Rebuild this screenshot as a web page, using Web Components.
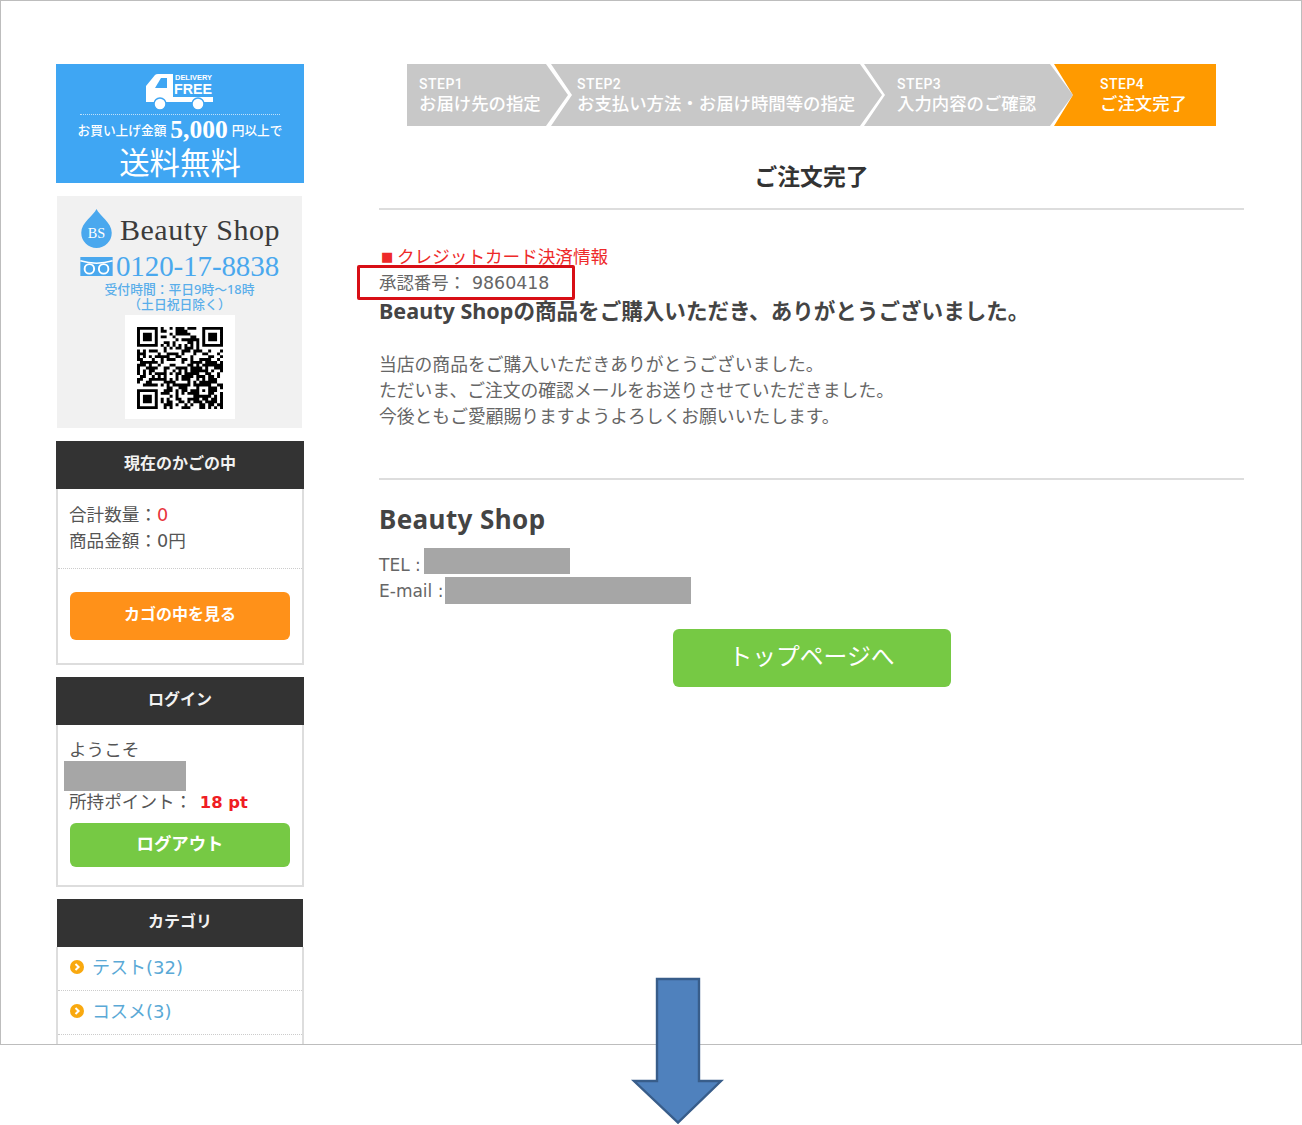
<!DOCTYPE html>
<html lang="ja"><head><meta charset="utf-8"><title>ご注文完了</title>
<style>
html,body{margin:0;padding:0;background:#fff}
body{position:relative;width:1302px;height:1125px;overflow:hidden;font-family:"DejaVu Sans","Noto Sans CJK JP",sans-serif;color:#555}
</style></head><body>
<app-frame>
  <side-bar slot="side">
    <free-banner></free-banner>
    <contact-card></contact-card>
    <side-panel heading="現在のかごの中">
      <cart-summary></cart-summary>
    </side-panel>
    <side-panel heading="ログイン">
      <login-box></login-box>
    </side-panel>
    <side-panel heading="カテゴリ" flush>
      <category-item>テスト(32)</category-item>
      <category-item>コスメ(3)</category-item>
      <category-item></category-item>
    </side-panel>
  </side-bar>
  <order-main slot="main"></order-main>
</app-frame>
<down-arrow></down-arrow>
<script>
const FN='"Noto Sans","Noto Sans CJK JP",sans-serif';
const FF='"DejaVu Sans","Noto Sans CJK JP",sans-serif';
function def(name,html,init){
  customElements.define(name,class extends HTMLElement{
    connectedCallback(){
      if(this.shadowRoot)return;
      const r=this.attachShadow({mode:'open'});
      r.innerHTML=typeof html==='function'?html(this):html;
      if(init)init(r,this);
    }
  });
}
def('app-frame',`<style>
:host{display:grid;box-sizing:border-box;width:1302px;height:1045px;border:1px solid #bdbdbd;overflow:hidden;padding:63px 57px 0 55px;grid-template-columns:248px 865px;column-gap:75px;align-items:start}
</style><slot name="side"></slot><slot name="main"></slot>`);
def('side-bar',`<style>:host{display:flex;flex-direction:column;align-items:stretch}</style><slot></slot>`);
def('free-banner',`<style>
:host{display:block;height:119px;background:#3fa6f3;color:#fff;text-align:center;overflow:hidden}
svg{display:block;margin:9px auto 0}
.dots{margin:3px 24px 0;border-top:1px dotted #bfe0fa}
.price{display:flex;justify-content:center;align-items:center;height:30px;margin-top:0;font:500 12.7px/30px ${FN};white-space:nowrap}
.price b{font:700 25.5px/30px "Liberation Serif",serif;margin:0 4px}
.free{font:400 30.4px/36px ${FN}}
</style>
<svg width="68" height="38" viewBox="0 0 68 38"><path fill="#fff" d="M0 13 L9 2 Q10 1 12 1 H27 V24 H67 V29 H0 Z"/><path fill="#3fa6f3" d="M9 15 L15 5 H21 V15 Z"/><circle cx="14" cy="31" r="6" fill="#fff" stroke="#3fa6f3" stroke-width="1.5"/><circle cx="52" cy="31" r="6" fill="#fff" stroke="#3fa6f3" stroke-width="1.5"/><text x="29" y="7" font-family="Liberation Sans" font-weight="700" font-size="7" fill="#fff" textLength="37" lengthAdjust="spacingAndGlyphs">DELIVERY</text><text x="28" y="21" font-family="Liberation Sans" font-weight="700" font-size="15" fill="#fff" textLength="38" lengthAdjust="spacingAndGlyphs">FREE</text></svg>
<div class="dots"></div>
<div class="price"><span>お買い上げ金額</span><b>5,000</b><span>円以上で</span></div>
<div class="free">送料無料</div>`);
def('contact-card',`<style>
:host{display:block;margin:13px 2px 13px 1px;height:232px;background:#f1f1f1;text-align:center;overflow:hidden}
.logo{display:flex;align-items:center;justify-content:center;gap:7px;height:46px;margin-top:9px}
.logo svg{margin-left:1px}
.logo span{font:400 30px/40px "Liberation Serif",serif;color:#3b3b3b;letter-spacing:.55px;margin-top:3px}
.tel{display:flex;align-items:center;justify-content:center;gap:3px;height:33px;margin-top:-1px;color:#4aa8ee;font:400 29px/33px "Liberation Serif",serif;letter-spacing:-.1px}
.hours{font:500 12.8px/15px ${FN};color:#5aaeea;margin-top:-1px}
qr-code{margin:3px auto 0}
</style>
<div class="logo"><svg width="33" height="40" viewBox="0 0 34 42"><path fill="#4aa8ee" d="M17 1 C20 8 33 15 33 26 A16 16 0 0 1 1 26 C1 15 14 8 17 1Z"/><text x="17" y="32" text-anchor="middle" font-family="Liberation Serif" font-size="15" fill="#fff">BS</text></svg><span>Beauty Shop</span></div>
<div class="tel"><svg width="33" height="19" viewBox="0 0 34 20"><rect width="34" height="20" fill="#4aa8ee"/><path d="M0 4 Q17 9 34 4" fill="none" stroke="#fff" stroke-width="1.6"/><circle cx="9.5" cy="12.5" r="5" fill="none" stroke="#fff" stroke-width="2"/><circle cx="24.5" cy="12.5" r="5" fill="none" stroke="#fff" stroke-width="2"/></svg><span>0120-17-8838</span></div>
<div class="hours">受付時間：平日9時～18時<br>（土日祝日除く）</div>
<qr-code></qr-code>`);
def('qr-code',`<style>:host{display:block;box-sizing:border-box;width:110px;height:104px;background:#fff;padding:12px 12px 0}svg{display:block}</style><svg width="86" height="82" viewBox="0 0 29 29" preserveAspectRatio="none"><path id="p" fill="#000"/></svg>`,(r)=>{
  const n=29;let s=20240611,d='';
  const rnd=()=>{s=(s*1664525+1013904223)>>>0;return s/4294967296};
  const inF=(x,y,a,b)=>x>=a&&x<a+8&&y>=b&&y<b+8;
  const finder=(a,b)=>`M${a} ${b}h7v7h-7zM${a+1} ${b+1}v5h5v-5zM${a+2} ${b+2}h3v3h-3z`;
  for(let y=0;y<n;y++)for(let x=0;x<n;x++){
    if(inF(x,y,0,0)||inF(x,y,21,0)||inF(x,y,0,21))continue;
    if(x>=20&&x<25&&y>=20&&y<25)continue;
    let on=rnd()<.54;
    if(y===6)on=x%2===0; if(x===6)on=y%2===0;
    if(on)d+=`M${x} ${y}h1v1h-1z`;
  }
  d+=finder(0,0)+finder(22,0)+finder(0,22)+'M20 20h5v5h-5zM21 21v3h3v-3zM22 22h1v1h-1z';
  const p=r.getElementById('p');p.setAttribute('d',d);p.setAttribute('fill-rule','evenodd');
});
def('side-panel',h=>`<style>
:host{display:block;margin-bottom:12px}
h3{margin:0;height:48px;background:#333;color:#f2f2f2;font:700 16px/44px ${FN};text-align:center}
:host([flush]) h3{margin:0 1px}
.b{border:2px solid #ddd;border-top:0}
</style><h3>${h.getAttribute('heading')}</h3><div class="b"><slot></slot></div>`);
def('action-button',`<style>
:host{display:block;color:#fff;text-align:center;border-radius:6px;font:700 16px/45px ${FN};background:var(--bg,#ff9119);height:var(--h,48px);line-height:calc(var(--h,48px) - 3px)}
</style><slot></slot>`);
def('cart-summary',`<style>
:host{display:block;font:400 17.6px/26px ${FF};color:#555}
.s{padding:13px 11px 14px;border-bottom:1px dotted #ccc}
.r{color:#e8343c}
action-button{margin:23px 12px 23px}
</style><div class="s">合計数量：<span class="r">0</span><br>商品金額：0円</div><action-button>カゴの中を見る</action-button>`);
def('login-box',`<style>
:host{display:block;font:400 17.6px/26px ${FF};color:#555;padding:12px 12px 18px 11px}
.red{color:#ef1d24;font-weight:700;font-size:16.4px;margin-left:2px}
gray-block{margin-left:-5px;width:122px;height:30px;margin-top:-2px}
.pt{line-height:22px;white-space:nowrap}
action-button{margin:9px 0 0 1px;--bg:#76c944;--h:44px;font-size:17.4px}
</style><div>ようこそ</div><gray-block></gray-block><div class="pt">所持ポイント： <span class="red">18 pt</span></div><action-button>ログアウト</action-button>`);
def('gray-block',`<style>:host{display:block;background:#a6a6a6}</style>`);
def('category-item',`<style>
:host{display:flex;align-items:center;box-sizing:content-box;height:41px;padding:0 0 2px 12px;border-bottom:1px dotted #ccc;gap:8px;color:#5aa9d6;font:400 18px/41px ${FF}}
svg{flex:none;position:relative;top:-1px}
</style><svg width="14" height="14" viewBox="0 0 14 14"><circle cx="7" cy="7" r="7" fill="#f9a90f"/><path d="M5.5 4 L8.6 7 L5.5 10" fill="none" stroke="#fff" stroke-width="2"/></svg><slot></slot>`);
def('step-bar',`<style>:host{display:flex;margin-left:28px;height:62px}</style><slot></slot>`);
def('step-item',h=>`<style>
:host{display:block;box-sizing:border-box;height:62px;background:var(--c,#c8c8c8);color:#fff;white-space:nowrap;flex:none}
.a{font:500 14px/18px Roboto,sans-serif;letter-spacing:.5px;padding-top:11px}
.b{font:500 17.4px/21px ${FN}}
</style><div class="a">${h.getAttribute('label')}</div><div class="b"><slot></slot></div>`);
def('order-main',`<style>
:host{display:block;color:#666}
step-item{margin-left:-18px}
.s1{margin-left:0;width:161px;padding-left:12px;clip-path:polygon(0 0,139px 0,100% 50%,139px 100%,0 100%)}
.s2{margin-left:-17px;width:331px;padding-left:26px;clip-path:polygon(0 0,309px 0,100% 50%,309px 100%,0 100%,21px 50%)}
.s3{width:209px;padding-left:33px;clip-path:polygon(0 0,186px 0,100% 50%,186px 100%,0 100%,21px 50%)}
.s4{margin-left:-19px;width:162px;padding-left:46px;--c:#ff9a00;clip-path:polygon(0 0,100% 0,100% 100%,0 100%,19px 50%)}
h1{margin:33px 0 0;padding-bottom:13px;border-bottom:2px solid #ddd;color:#333;font:700 22.8px/36px ${FN};text-align:center}
.credit{margin:34px 0 0 2px;height:26px;font:400 17.6px/26px ${FF};color:#ee2a2a}
.credit span{display:inline-block;width:16px;font-size:13px;line-height:1;vertical-align:2px}
.ok{position:relative;font:400 17.4px/27px ${FF};color:#666}
.ok i{font-style:normal;margin-left:6px}
.ok::after{content:"";position:absolute;left:-22px;top:-5px;width:218px;height:35px;box-sizing:border-box;border:3px solid #d80f16;border-radius:2px}
h2{margin:-1px 0 0;color:#444;font:700 21.57px/30px ${FN}}
.msg{margin:26px 0 0;font:400 17.8px/26px ${FF};color:#666}
hr{border:0;border-top:2px solid #ddd;margin:48px 0 0}
h4{margin:21px 0 15px;color:#444;font:700 26px/36px ${FN};letter-spacing:.4px}
.c{display:flex;align-items:flex-start;height:26px;font:400 17px/26px ${FF};color:#666;white-space:nowrap}
.c span{flex:none}
.tb{width:146px;height:26px;margin:-4px 0 0 0}
.mb{width:246px;height:27px;margin:-1px 0 0 0}
.cta{display:block;width:278px;margin:25px auto 0;--bg:#76c944;--h:58px;font-size:23.8px;font-weight:400}
</style>
<step-bar>
<step-item class="s1" label="STEP1">お届け先の指定</step-item>
<step-item class="s2" label="STEP2">お支払い方法・お届け時間等の指定</step-item>
<step-item class="s3" label="STEP3">入力内容のご確認</step-item>
<step-item class="s4" label="STEP4">ご注文完了</step-item>
</step-bar>
<h1>ご注文完了</h1>
<div class="credit"><span>■</span>クレジットカード決済情報</div>
<div class="ok">承認番号：<i>9860418</i></div>
<h2>Beauty Shopの商品をご購入いただき、ありがとうございました。</h2>
<div class="msg">当店の商品をご購入いただきありがとうございました。<br>ただいま、ご注文の確認メールをお送りさせていただきました。<br>今後ともご愛顧賜りますようよろしくお願いいたします。</div>
<hr>
<h4>Beauty Shop</h4>
<div class="c"><span style="width:45px">TEL :</span><gray-block class="tb"></gray-block></div>
<div class="c"><span style="width:66px">E-mail :</span><gray-block class="mb"></gray-block></div>
<action-button class="cta">トップページへ</action-button>`);
def('down-arrow',`<style>:host{position:absolute;left:630px;top:976px;width:96px;height:150px;display:block}svg{display:block}</style>
<svg width="96" height="150" viewBox="0 0 96 150"><path d="M27 3 H69 V105 H91 L48 146.5 L4 105 H27 Z" fill="#4f81bd" stroke="#385d8a" stroke-width="2.4"/></svg>`);
</script>
</body></html>
